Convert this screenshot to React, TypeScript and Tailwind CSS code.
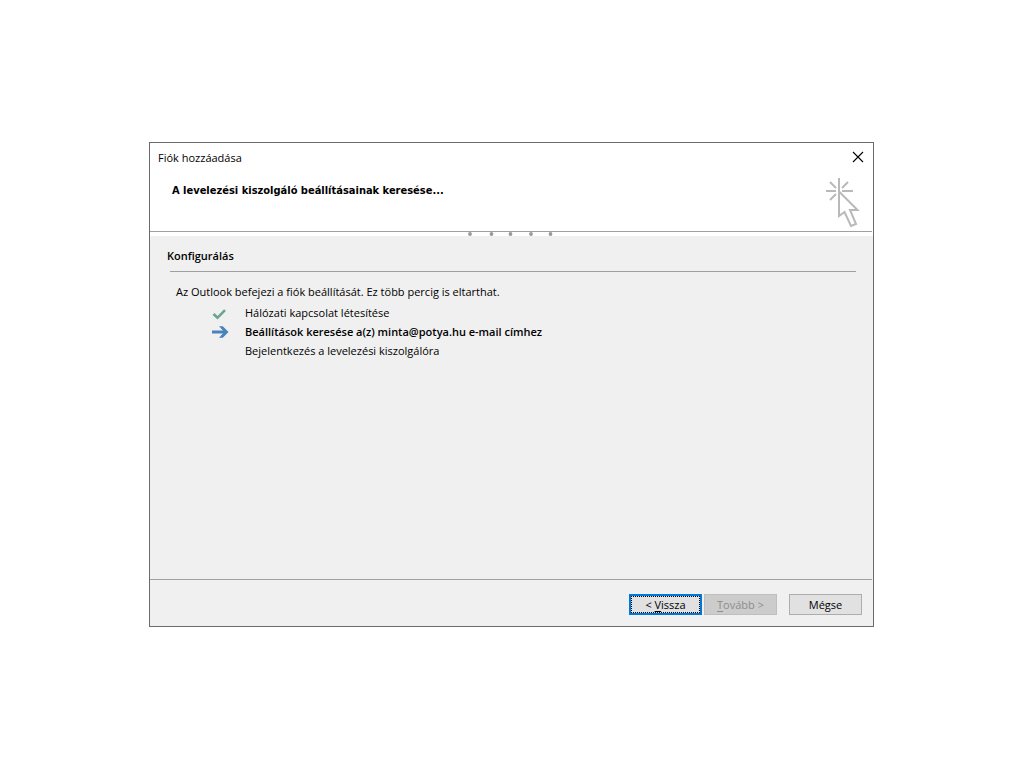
import React from "react"

const steps = [
    { label: "Hálózati kapcsolat létesítése", state: "done" },
    { label: "Beállítások keresése a(z) minta@potya.hu e-mail címhez", state: "active" },
    { label: "Bejelentkezés a levelezési kiszolgálóra", state: "waiting" },
]

const CheckIcon: React.FC = () => (
    <svg width="16" height="14" viewBox="0 0 16 14" fill="none" aria-hidden="true">
        <path d="M2.5 8L6.5 11.8L14 4.2" stroke="#68a490" strokeWidth="2.6" />
    </svg>
)

const ArrowIcon: React.FC = () => (
    <svg width="18" height="13" viewBox="0 0 18 13" fill="none" aria-hidden="true">
        <path d="M1 7H15" stroke="#4a82bd" strokeWidth="3" />
        <path d="M8 1.2H11.8L17.5 7L11.8 12.8H8L13.2 7Z" fill="#4a82bd" />
    </svg>
)

// cursor with the click sparks around its tip
const ClickIcon: React.FC = () => (
    <svg width="36" height="50" viewBox="0 0 36 50" fill="none" stroke="#b9b9b9" strokeWidth="2" aria-hidden="true">
        <path d="M15 0V14M2 13H12M18 13H29M6 4L12 10M24 4L18 10M6 22L12 16" />
        <path d="M15 13.5V38L20.5 34L27 48L32 46L26 32H33.5Z" />
    </svg>
)

const App: React.FC = () => {
    return (
        <main className="min-h-screen bg-white pt-[142px] pr-[150px] pb-10 pl-[149px] font-['Open_Sans','Noto_Sans',sans-serif] text-[11px] leading-4 text-black">
            <section className="flex min-h-[485px] flex-col border border-[#6b6b6b] bg-[#f0f0f0]">
                <header className="bg-white pb-1">
                    <div className="mr-px flex h-[89px] flex-col border-b border-[#a0a0a0]">
                        <div className="flex items-start justify-between pt-[7px] pr-2 pl-2">
                            <span>Fiók hozzáadása</span>
                            <button type="button" aria-label="Bezárás" className="pt-px">
                                <svg width="12" height="12" viewBox="0 0 12 12" fill="none" stroke="#000" strokeWidth="1.1">
                                    <path d="M1 1L11 11M11 1L1 11" />
                                </svg>
                            </button>
                        </div>
                        <div className="flex justify-between pr-3 pl-[22px]">
                            <h1 className="pt-[17px] font-['DejaVu_Sans_Condensed','Open_Sans',sans-serif] font-bold">A levelezési kiszolgáló beállításainak keresése...</h1>
                            <span className="relative h-12">
                                <span className="absolute top-3 right-0"><ClickIcon /></span>
                            </span>
                        </div>
                    </div>
                    {/* progress dots */}
                    <div className="relative">
                        <svg className="absolute top-0 left-[317px]" width="88" height="4" viewBox="0 0 88 4" fill="#999" aria-hidden="true">
                            <circle cx="3" cy="2" r="1.9" />
                            <circle cx="24.5" cy="2" r="1.9" />
                            <circle cx="43.5" cy="2" r="1.9" />
                            <circle cx="64" cy="2" r="1.9" />
                            <circle cx="83.5" cy="2" r="1.9" />
                        </svg>
                    </div>
                </header>
                <div className="flex-1 pt-3 pr-[17px] pl-[17px]">
                    <h2 className="font-semibold">Konfigurálás</h2>
                    <hr className="mt-[7px] ml-[3px] border-[#a0a0a0]" />
                    <p className="mt-3 pl-[9px]">Az Outlook befejezi a fiók beállítását. Ez több percig is eltarthat.</p>
                    <ul className="mt-[3px] pl-11">
                        {steps.map((step) => (
                            <li key={step.label} className="flex h-[19px] items-center">
                                <span className="flex w-[34px] shrink-0">
                                    {step.state === "done" && <CheckIcon />}
                                    {step.state === "active" && <ArrowIcon />}
                                </span>
                                <span className={step.state === "active" ? "font-semibold" : ""}>{step.label}</span>
                            </li>
                        ))}
                    </ul>
                </div>
                <footer className="mr-px flex h-[47px] justify-end border-t border-[#a0a0a0] pt-[14px] pr-[10px]">
                    <button type="button" className="h-[21px] w-[73px] border-2 border-[#0078d7] bg-[#e1e1e1]">
                        <span className="flex h-full items-center justify-center border border-dotted border-black">
                            <span>&lt; <u className="underline-offset-2">V</u>issza</span>
                        </span>
                    </button>
                    <button type="button" disabled className="ml-[2px] h-[21px] w-[73px] border border-[#bfbfbf] bg-[#cccccc] text-[#8d8d8d]">
                        <u className="underline-offset-2">T</u>ovább &gt;
                    </button>
                    <button type="button" className="ml-3 h-[21px] w-[73px] border border-[#adadad] bg-[#e1e1e1]">Mégse</button>
                </footer>
            </section>
        </main>
    )
}

export default App
